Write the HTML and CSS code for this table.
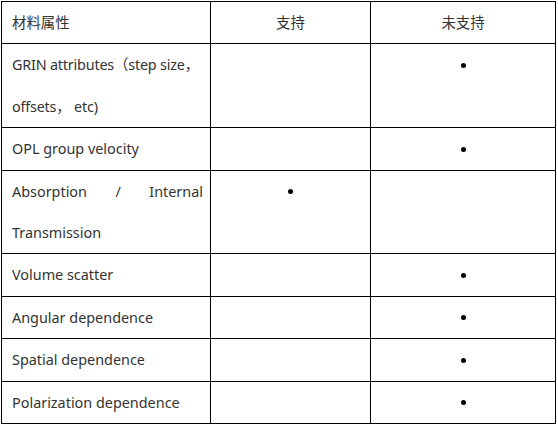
FILE: index.html
```html
<!DOCTYPE html>
<html lang="zh">
<head>
<meta charset="utf-8">
<link rel="stylesheet" href="styles.css">
</head>
<body>
<table class="grid">
  <colgroup>
    <col class="c1"><col class="c2"><col class="c3">
  </colgroup>
  <tr class="head">
    <td class="name">材料属性</td>
    <td class="mid">支持</td>
    <td class="mid">未支持</td>
  </tr>
  <tr>
    <td class="name keep">GRIN attributes（step size，<br>offsets， etc)</td>
    <td class="mid"></td>
    <td class="mid"><span class="dot"></span></td>
  </tr>
  <tr>
    <td class="name">OPL group velocity</td>
    <td class="mid"></td>
    <td class="mid"><span class="dot"></span></td>
  </tr>
  <tr>
    <td class="name">Absorption / Internal Transmission</td>
    <td class="mid"><span class="dot"></span></td>
    <td class="mid"></td>
  </tr>
  <tr>
    <td class="name">Volume scatter</td>
    <td class="mid"></td>
    <td class="mid"><span class="dot"></span></td>
  </tr>
  <tr>
    <td class="name">Angular dependence</td>
    <td class="mid"></td>
    <td class="mid"><span class="dot"></span></td>
  </tr>
  <tr>
    <td class="name">Spatial dependence</td>
    <td class="mid"></td>
    <td class="mid"><span class="dot"></span></td>
  </tr>
  <tr>
    <td class="name">Polarization dependence</td>
    <td class="mid"></td>
    <td class="mid"><span class="dot"></span></td>
  </tr>
</table>
</body>
</html>
```
FILE: styles.css
```css
html, body {
  margin: 0;
  padding: 0;
  background: #ffffff;
}
body {
  padding: 1px 0 0 1px;
  font-family: "Noto Sans", "Noto Sans CJK SC", sans-serif;
  font-size: 14.4px;
  color: #333333;
}
.grid {
  border-collapse: collapse;
  table-layout: fixed;
  width: 555px;
}
.c1 { width: 209px; }
.c2 { width: 160px; }
.c3 { width: 185px; }
.grid td {
  border: 1px solid #000;
  padding: 0 7px 0 10px;
  line-height: 41.4px;
  vertical-align: top;
}
.grid td.name {
  text-align: justify;
}
.grid td.keep {
  text-align: left;
  white-space: nowrap;
  letter-spacing: -0.2px;
}
.grid td.mid {
  text-align: center;
  padding: 0 4px;
}
.dot {
  display: inline-block;
  width: 5px;
  height: 5px;
  border-radius: 50%;
  background: #000;
  vertical-align: middle;
  margin-top: -2px;
}
```
